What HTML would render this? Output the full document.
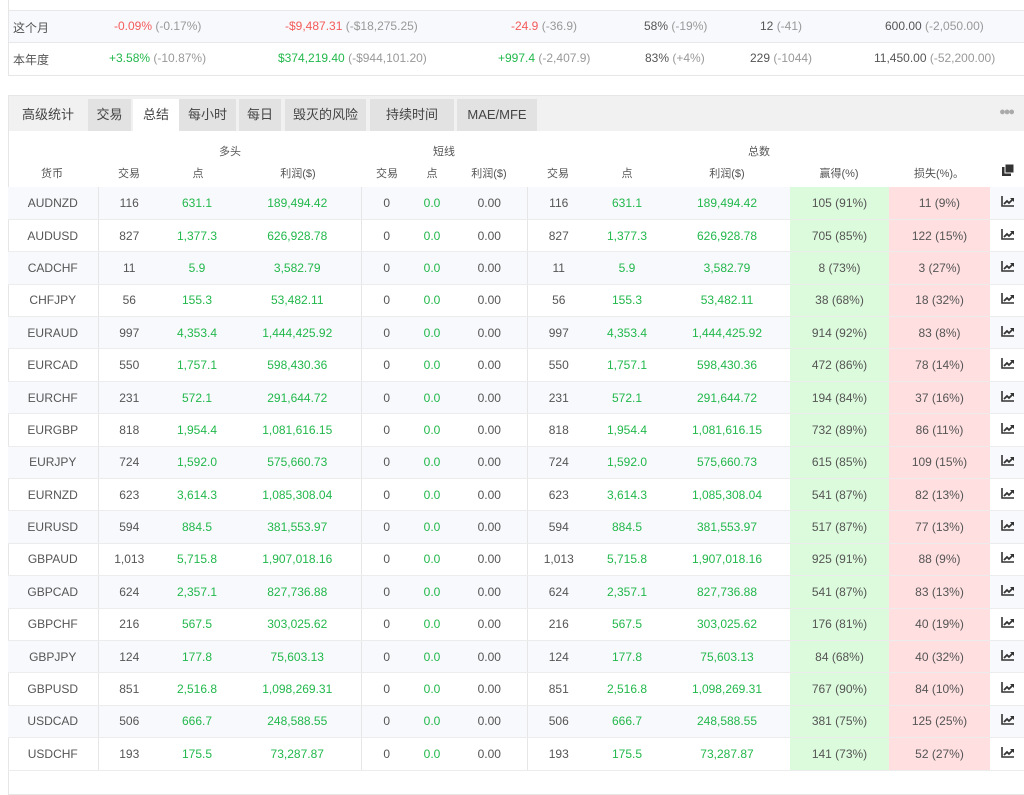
<!DOCTYPE html>
<html><head><meta charset="utf-8"><style>
*{box-sizing:border-box;margin:0;padding:0}
body{width:1024px;height:773px;overflow:hidden;background:#fff;font-family:"Liberation Sans","Noto Sans CJK SC",sans-serif;font-size:12px;color:#555;position:relative}
.top{position:absolute;left:8px;top:-2px;width:1030px;height:78px;border:1px solid #e6e6e6;background:#fff}
.tr{position:absolute;left:0;width:100%;height:32px;border-top:1px solid #e8e8e8}
.tr span{position:absolute;top:8px;white-space:nowrap}
.g{color:#999}.red{color:#f45b5b}.grn{color:#22b84c}
.panel{position:absolute;left:8px;top:95px;width:1030px;height:700px;border:1px solid #e6e6e6}
.tabs{position:absolute;left:0;top:0;width:100%;height:35px;background:#f1f1f1}
.tab{position:absolute;top:3px;height:32px;line-height:32px;text-align:center;font-size:13px;color:#444;background:#e2e2e2}
.more{position:absolute;right:24px;top:10px;color:#aaa;font-size:11px;letter-spacing:-2px}
table{position:absolute;left:0;top:187px;border-collapse:collapse;table-layout:fixed;width:1016px}
td{height:32.4px;text-align:center;border-bottom:1px solid #ececec;padding:0;white-space:nowrap}
tr:nth-child(odd) td{background:#f8f9fc}
td.w{background:#dcfadc!important}td.l{background:#ffdfe0!important}
td.b{border-right:1px solid #e6e6e6}
.h{position:absolute;font-size:11px;color:#555;transform:translateX(-50%);white-space:nowrap}
</style></head><body>
<div class="top">
 <div class="tr" style="top:11px;background:#f8f9fc">
  <span style="left:4px">这个月</span>
  <span style="left:105px"><i class="red" style="font-style:normal">-0.09%</i> <i class="g" style="font-style:normal">(-0.17%)</i></span>
  <span style="left:276px"><i class="red" style="font-style:normal">-$9,487.31</i> <i class="g" style="font-style:normal">(-$18,275.25)</i></span>
  <span style="left:502px"><i class="red" style="font-style:normal">-24.9</i> <i class="g" style="font-style:normal">(-36.9)</i></span>
  <span style="left:635px">58% <i class="g" style="font-style:normal">(-19%)</i></span>
  <span style="left:751px">12 <i class="g" style="font-style:normal">(-41)</i></span>
  <span style="left:876px">600.00 <i class="g" style="font-style:normal">(-2,050.00)</i></span>
 </div>
 <div class="tr" style="top:43px">
  <span style="left:4px">本年度</span>
  <span style="left:100px"><i class="grn" style="font-style:normal">+3.58%</i> <i class="g" style="font-style:normal">(-10.87%)</i></span>
  <span style="left:269px"><i class="grn" style="font-style:normal">$374,219.40</i> <i class="g" style="font-style:normal">(-$944,101.20)</i></span>
  <span style="left:489px"><i class="grn" style="font-style:normal">+997.4</i> <i class="g" style="font-style:normal">(-2,407.9)</i></span>
  <span style="left:636px">83% <i class="g" style="font-style:normal">(+4%)</i></span>
  <span style="left:741px">229 <i class="g" style="font-style:normal">(-1044)</i></span>
  <span style="left:865px">11,450.00 <i class="g" style="font-style:normal">(-52,200.00)</i></span>
 </div>
</div>
<div class="panel">
 <div class="tabs">
  <div class="tab" style="left:4px;width:70px;background:none">高级统计</div>
  <div class="tab" style="left:79px;width:43px">交易</div>
  <div class="tab" style="left:124px;width:46px;background:#fff">总结</div>
  <div class="tab" style="left:170px;width:57px">每小时</div>
  <div class="tab" style="left:230px;width:42px">每日</div>
  <div class="tab" style="left:276px;width:81px">毁灭的风险</div>
  <div class="tab" style="left:361px;width:84px">持续时间</div>
  <div class="tab" style="left:448px;width:80px">MAE/MFE</div>
  <div class="more">●●●</div>
 </div>
</div>
<div class="h" style="left:230px;top:143px">多头</div>
<div class="h" style="left:444px;top:143px">短线</div>
<div class="h" style="left:759px;top:143px">总数</div>
<div class="h" style="left:52px;top:165px">货币</div>
<div class="h" style="left:129px;top:165px">交易</div>
<div class="h" style="left:198px;top:165px">点</div>
<div class="h" style="left:298px;top:165px">利润($)</div>
<div class="h" style="left:387px;top:165px">交易</div>
<div class="h" style="left:432px;top:165px">点</div>
<div class="h" style="left:489px;top:165px">利润($)</div>
<div class="h" style="left:558px;top:165px">交易</div>
<div class="h" style="left:627px;top:165px">点</div>
<div class="h" style="left:727px;top:165px">利润($)</div>
<div class="h" style="left:839px;top:165px">赢得(%)</div>
<div class="h" style="left:939px;top:165px">损失(%)。</div>
<svg style="position:absolute;left:1001px;top:163px" width="14" height="14" viewBox="0 0 14 14"><rect x="1" y="4" width="9" height="9" fill="#333"/><rect x="4" y="1" width="9" height="9" fill="#333" stroke="#fff" stroke-width="1"/></svg>
<table style="left:8px">
<colgroup><col style="width:90px"><col style="width:62px"><col style="width:74px"><col style="width:127px"><col style="width:51px"><col style="width:40px"><col style="width:75px"><col style="width:63px"><col style="width:74px"><col style="width:126px"><col style="width:99px"><col style="width:101px"><col style="width:34px"></colgroup>
<tbody id="tb">
</tbody></table>
<script>
var d=[["AUDNZD",116,"631.1","189,494.42","105 (91%)","11 (9%)"],["AUDUSD",827,"1,377.3","626,928.78","705 (85%)","122 (15%)"],["CADCHF",11,"5.9","3,582.79","8 (73%)","3 (27%)"],["CHFJPY",56,"155.3","53,482.11","38 (68%)","18 (32%)"],["EURAUD",997,"4,353.4","1,444,425.92","914 (92%)","83 (8%)"],["EURCAD",550,"1,757.1","598,430.36","472 (86%)","78 (14%)"],["EURCHF",231,"572.1","291,644.72","194 (84%)","37 (16%)"],["EURGBP",818,"1,954.4","1,081,616.15","732 (89%)","86 (11%)"],["EURJPY",724,"1,592.0","575,660.73","615 (85%)","109 (15%)"],["EURNZD",623,"3,614.3","1,085,308.04","541 (87%)","82 (13%)"],["EURUSD",594,"884.5","381,553.97","517 (87%)","77 (13%)"],["GBPAUD","1,013","5,715.8","1,907,018.16","925 (91%)","88 (9%)"],["GBPCAD",624,"2,357.1","827,736.88","541 (87%)","83 (13%)"],["GBPCHF",216,"567.5","303,025.62","176 (81%)","40 (19%)"],["GBPJPY",124,"177.8","75,603.13","84 (68%)","40 (32%)"],["GBPUSD",851,"2,516.8","1,098,269.31","767 (90%)","84 (10%)"],["USDCAD",506,"666.7","248,588.55","381 (75%)","125 (25%)"],["USDCHF",193,"175.5","73,287.87","141 (73%)","52 (27%)"]];
var ic='<svg width="13" height="11" viewBox="0 0 13 11"><path d="M1 0V10H13" fill="none" stroke="#333" stroke-width="1.6"/><path d="M3 8L6 5L8 7L12 3" fill="none" stroke="#333" stroke-width="1.8"/><path d="M9 2H13V6Z" fill="#333"/></svg>';
var h="";d.forEach(function(r){h+='<tr><td class="b">'+r[0]+'</td><td>'+r[1]+'</td><td class="grn">'+r[2]+'</td><td class="grn b">'+r[3]+'</td><td>0</td><td class="grn">0.0</td><td class="b">0.00</td><td>'+r[1]+'</td><td class="grn">'+r[2]+'</td><td class="grn">'+r[3]+'</td><td class="w">'+r[4]+'</td><td class="l">'+r[5]+'</td><td>'+ic+'</td></tr>';});
document.getElementById("tb").innerHTML=h;
</script>
</body></html>
